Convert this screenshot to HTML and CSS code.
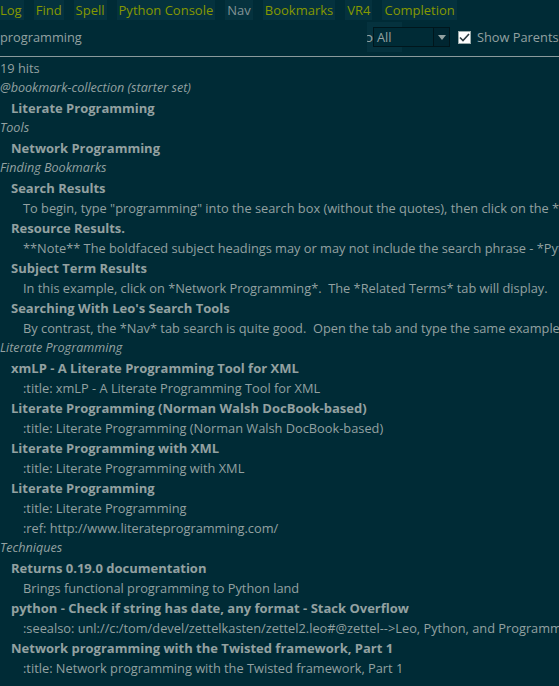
FILE: index.html
```html
<!DOCTYPE html>
<html>
<head>
<meta charset="utf-8">
<link rel="stylesheet" href="styles.css">
</head>
<body>
<div class="app">
  <div class="tabs">
    <span class="tab">Log</span>
    <span class="tab">Find</span>
    <span class="tab">Spell</span>
    <span class="tab">Python Console</span>
    <span class="tab active">Nav</span>
    <span class="tab">Bookmarks</span>
    <span class="tab">VR4</span>
    <span class="tab">Completion</span>
  </div>
  <div class="searchbar">
    <div class="query">programming</div>
    <div class="mode">
      <span class="cut">ɔ</span>
      <div class="combo">
        <span class="combo-text">All</span>
        <span class="combo-btn"><svg width="8" height="5" viewBox="0 0 8 5"><path d="M0 0H8L4 5Z" fill="#93a1a1"/></svg></span>
      </div>
    </div>
    <label class="check">
      <span class="box"><svg width="11" height="9" viewBox="0 0 11 9"><path d="M1 4.5L4 7.5L10 1" fill="none" stroke="#2a3a40" stroke-width="1.6"/></svg></span>
      <span class="check-label">Show Parents</span>
    </label>
  </div>
  <div class="results">
    <div class="row">19 hits</div>
    <div class="row parent">@bookmark-collection (starter set)</div>
    <div class="row hit">Literate Programming</div>
    <div class="row parent">Tools</div>
    <div class="row hit">Network Programming</div>
    <div class="row parent">Finding Bookmarks</div>
    <div class="row hit">Search Results</div>
    <div class="row body">To begin, type "programming" into the search box (without the quotes), then click on the *Python Console* tab</div>
    <div class="row hit">Resource Results.</div>
    <div class="row body">**Note** The boldfaced subject headings may or may not include the search phrase - *Python*</div>
    <div class="row hit">Subject Term Results</div>
    <div class="row body">In this example, click on *Network Programming*.&nbsp; The *Related Terms* tab will display.</div>
    <div class="row hit">Searching With Leo's Search Tools</div>
    <div class="row body">By contrast, the *Nav* tab search is quite good.&nbsp; Open the tab and type the same example</div>
    <div class="row parent">Literate Programming</div>
    <div class="row hit">xmLP - A Literate Programming Tool for XML</div>
    <div class="row body">:title: xmLP - A Literate Programming Tool for XML</div>
    <div class="row hit">Literate Programming (Norman Walsh DocBook-based)</div>
    <div class="row body">:title: Literate Programming (Norman Walsh DocBook-based)</div>
    <div class="row hit">Literate Programming with XML</div>
    <div class="row body">:title: Literate Programming with XML</div>
    <div class="row hit">Literate Programming</div>
    <div class="row body">:title: Literate Programming</div>
    <div class="row body">:ref: http://www.literateprogramming.com/</div>
    <div class="row parent">Techniques</div>
    <div class="row hit">Returns 0.19.0 documentation</div>
    <div class="row body">Brings functional programming to Python land</div>
    <div class="row hit">python - Check if string has date, any format - Stack Overflow</div>
    <div class="row body">:seealso: unl://c:/tom/devel/zettelkasten/zettel2.leo#@zettel--&gt;Leo, Python, and Programming</div>
    <div class="row hit">Network programming with the Twisted framework, Part 1</div>
    <div class="row body">:title: Network programming with the Twisted framework, Part 1</div>
  </div>
</div>
</body>
</html>
```
FILE: styles.css
```css
html, body {
  margin: 0;
  padding: 0;
  background: #002b36;
}
body {
  font-family: "Open Sans", "DejaVu Sans", sans-serif;
  font-size: 12.8px;
  color: #93a1a1;
  width: 559px;
  height: 686px;
  overflow: hidden;
}
.app {
  display: flex;
  flex-direction: column;
}
.tabs {
  display: flex;
  gap: 10px;
  height: 20px;
  margin-left: -2px;
  font-size: 13px;
}
.tab {
  background: #05323e;
  color: #859900;
  padding: 0 2px;
  line-height: 20px;
  height: 20px;
  white-space: nowrap;
}
.tab.active {
  color: #839496;
}
.searchbar {
  display: flex;
  align-items: center;
  height: 34px;
  padding-bottom: 2px;
  border-bottom: 1px solid #8a9a9c;
}
.query {
  flex: 1;
  color: #93a1a1;
  line-height: 20px;
}
.mode {
  display: flex;
  align-items: center;
  height: 30px;
  background: linear-gradient(to right, #05323e 35px, transparent 35px);
  margin-right: 8px;
}
.cut {
  width: 6px;
  overflow: hidden;
  color: #93a1a1;
  display: inline-block;
  text-align: right;
  direction: rtl;
}
.combo {
  display: flex;
  align-items: stretch;
  width: 77px;
  height: 20px;
  box-sizing: border-box;
  border: 1px solid #00161c;
  background: #002b36;
}
.combo-text {
  flex: 1;
  line-height: 18px;
  padding-left: 3px;
}
.combo-btn {
  width: 15px;
  display: flex;
  align-items: center;
  justify-content: center;
  background: #002631;
  border-left: 1px solid #00161c;
}
.check {
  display: flex;
  align-items: center;
  gap: 6px;
  white-space: nowrap;
  width: 101px;
  overflow: hidden;
}
.box {
  flex: none;
  width: 13px;
  height: 13px;
  background: #fdfdfd;
  border: 1px solid #9aa;
  box-sizing: border-box;
  display: flex;
  align-items: center;
  justify-content: center;
}
.results {
  padding-top: 1px;
}
.row {
  height: 20px;
  line-height: 20px;
  white-space: nowrap;
  overflow: hidden;
}
.parent {
  font-style: italic;
  font-size: 12.6px;
}
.hit {
  font-weight: bold;
  font-size: 13px;
  padding-left: 11px;
}
.body {
  padding-left: 23px;
}
```
